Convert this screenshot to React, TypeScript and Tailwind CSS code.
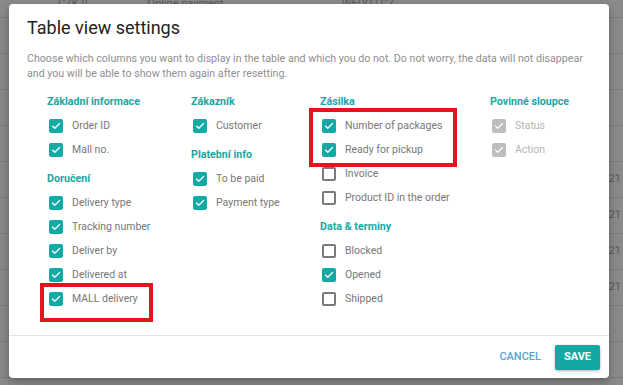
import React from "react"

type Item = { label: string; checked: boolean; disabled?: boolean }
type Group = { title: string; items: Item[] }

const columns: { width: string; groups: Group[] }[] = [
    {
        width: "w-[144px]",
        groups: [
            { title: "Základní informace", items: [{ label: "Order ID", checked: true }, { label: "Mall no.", checked: true }] },
            {
                title: "Doručení",
                items: [
                    { label: "Delivery type", checked: true },
                    { label: "Tracking number", checked: true },
                    { label: "Deliver by", checked: true },
                    { label: "Delivered at", checked: true },
                    { label: "MALL delivery", checked: true },
                ],
            },
        ],
    },
    {
        width: "w-[129px]",
        groups: [
            { title: "Zákazník", items: [{ label: "Customer", checked: true }] },
            { title: "Platební info", items: [{ label: "To be paid", checked: true }, { label: "Payment type", checked: true }] },
        ],
    },
    {
        width: "w-[170px]",
        groups: [
            {
                title: "Zásilka",
                items: [
                    { label: "Number of packages", checked: true },
                    { label: "Ready for pickup", checked: true },
                    { label: "Invoice", checked: false },
                    { label: "Product ID in the order", checked: false },
                ],
            },
            {
                title: "Data & terminy",
                items: [
                    { label: "Blocked", checked: false },
                    { label: "Opened", checked: true },
                    { label: "Shipped", checked: false },
                ],
            },
        ],
    },
    {
        width: "w-[110px]",
        groups: [
            {
                title: "Povinné sloupce",
                items: [
                    { label: "Status", checked: true, disabled: true },
                    { label: "Action", checked: true, disabled: true },
                ],
            },
        ],
    },
]

function Checkbox({ checked, disabled }: { checked: boolean; disabled?: boolean }) {
    if (!checked) {
        return <div className="w-[14px] h-[14px] rounded-[2px] border-2 border-[#7a7a7a] bg-white" />
    }
    return (
        <div
            className={`w-[14px] h-[14px] rounded-[2px] flex items-center justify-center ${disabled ? "bg-[#bdbdbd]" : "bg-[#14a9a4]"}`}
        >
            <svg width="10" height="10" viewBox="0 0 24 24" fill="none">
                <path d="M4 12.5l5 5L20 6.5" stroke="white" strokeWidth="3" strokeLinecap="square" />
            </svg>
        </div>
    )
}

export default function App() {
    const bgRows = Array.from({ length: 11 })

    return (
        <div className="relative w-[623px] h-[385px] overflow-hidden bg-[#8a8a8a]" style={{ fontFamily: "Roboto, 'Liberation Sans', sans-serif" }}>
            {/* table behind the overlay */}
            <div className="flex flex-col">
                <div className="h-[18px] border-b border-[#7b7b7b] flex items-start text-[11px] text-[#5a5a5a] leading-[8px]">
                    <span className="ml-[58px]">CZK 0</span>
                    <span className="ml-[60px]">Online payment</span>
                    <span className="ml-[118px]">WEDO | CZ</span>
                </div>
                {bgRows.map((_, i) => (
                    <div key={i} className="h-[36px] border-b border-[#7b7b7b] flex items-center justify-end pr-[2px] text-[11px] text-[#5a5a5a]">
                        {i >= 4 && i <= 7 ? "21" : ""}
                    </div>
                ))}
            </div>

            {/* Dialog */}
            <div className="absolute left-[9px] top-[4px] w-[600px] h-[374px] bg-white rounded-[4px] shadow-[0_4px_10px_rgba(0,0,0,0.3)] flex flex-col">
                <div className="px-[18px] pt-[13px]">
                    <h1 className="text-[18px] leading-[22px] text-[#222]">Table view settings</h1>
                    <p className="mt-[12px] text-[10.65px] leading-[15px] text-[#8f8f8f]">
                        Choose which columns you want to display in the table and which you do not. Do not worry, the data will not disappear and you will be able to show them again after resetting.
                    </p>
                </div>

                <div className="flex pl-[38px] pt-[14px] flex-1">
                    {columns.map((col, ci) => (
                        <div key={ci} className={`${col.width} flex flex-col`}>
                            {col.groups.map((g, gi) => (
                                <div key={gi} className={gi > 0 ? "mt-[10px]" : ""}>
                                    <div className="text-[10.7px] leading-[14px] font-bold text-[#18a8a2] mb-[5px]">{g.title}</div>
                                    {g.items.map((it) => (
                                        <div key={it.label} className="flex items-center h-[24px] pl-[2px]">
                                            <Checkbox checked={it.checked} disabled={it.disabled} />
                                            <span className={`ml-[9px] text-[10.5px] ${it.disabled ? "text-[#b5b5b5]" : "text-[#777]"}`}>{it.label}</span>
                                        </div>
                                    ))}
                                </div>
                            ))}
                        </div>
                    ))}
                </div>

                <div className="border-t border-[#e2e2e2] h-[43px] flex items-center justify-end pr-[9px] gap-[13px]">
                    <button className="text-[11px] font-medium text-[#5aa3d6] px-[1px]">CANCEL</button>
                    <button className="h-[25px] w-[45px] rounded-[2px] bg-[#12a9a4] text-white text-[11px] font-bold shadow-[0_1px_3px_rgba(0,0,0,0.3)]">
                        SAVE
                    </button>
                </div>
            </div>

            {/* red annotation boxes */}
            <div className="absolute left-[40px] top-[283px] w-[113px] h-[39px] border-[4px] border-[#e5141f]" />
            <div className="absolute left-[309px] top-[108px] w-[148px] h-[59px] border-[4px] border-[#e5141f]" />
        </div>
    )
}
